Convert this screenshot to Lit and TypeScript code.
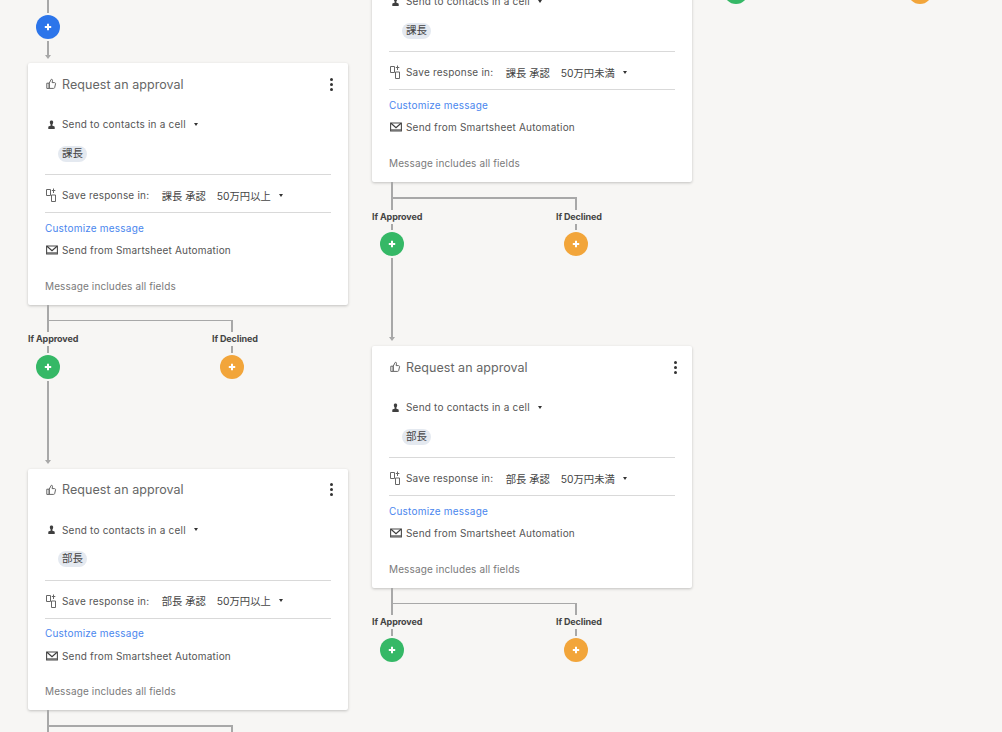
import { LitElement, html, css } from "lit";
import { customElement } from "lit/decorators.js";

const plus = html`<svg class="plus" viewBox="0 0 8 8" width="8" height="8"><path d="M4 .8v6.400M.8 4h6.400" stroke="#fff" stroke-width="2" fill="none"/></svg>`;
const thumb = html`<svg class="ic" width="11" height="12" viewBox="0 0 11 12"><path d="M3.200 5.200 5.200 1.400c.9-.3 1.500.3 1.300 1.300L6.100 4.600h2.400c.8 0 1.200.6 1 1.300l-.8 3.600c-.2.600-.5.900-1.100.9H3.200zM.8 5.200h2.400v5.200H.8z" fill="none" stroke="#666" stroke-width="1"/></svg>`;
const person = html`<svg class="ic" width="11" height="11" viewBox="0 0 11 11"><path d="M5.500 1.500c1 0 1.700.7 1.700 1.700 0 .9-.4 1.700-.8 2.200v1.300c1.200.2 2.300.5 2.300 1.400v2H2.300v-2c0-.9 1.100-1.200 2.300-1.400V5.400c-.4-.5-.8-1.300-.8-2.200 0-1 .7-1.700 1.700-1.700z" fill="#3f3f3f"/></svg>`;
const save = html`<svg class="ic" width="12" height="14" viewBox="0 0 12 14"><path d="M.5 1.500h4v6h-4zM5.500 7h4v6.500h-4z" fill="none" stroke="#666" stroke-width="1"/><path d="M7.500 .5V5M5.800 2.500h3.500" fill="none" stroke="#666" stroke-width="1"/></svg>`;
const mail = html`<svg class="ic" width="12" height="10" viewBox="0 0 12 10"><path d="M.6 1h10.800v8H.6z" fill="#fff" stroke="#4a4a4a" stroke-width="1.100"/><path d="M1 1.300 6 5.600l5-4.300" fill="none" stroke="#3c3c3c" stroke-width="1.200"/><path d="M1 8h10" stroke="#666" stroke-width="1.500"/></svg>`;
const caret = html`<span class="caret"></span>`;

@customElement("app-root")
export class AppRoot extends LitElement {
  static styles = css`
    :host { display: block; height: 732px; overflow: hidden; background: #f7f6f4; font-family: Inter, "Noto Sans CJK JP", sans-serif; }
    .canvas { display: flex; gap: 24px; padding-left: 28px; height: 732px; overflow: hidden; }
    .col { width: 320px; flex: none; display: flex; flex-direction: column; }
    .col2 { margin-top: -59.600px; }
    .col3 { margin-top: -70px; }
    .stem { width: 2px; background: #a8a8a8; margin-left: 19px; flex: none; }
    .arrow { width: 0; height: 0; margin-left: 16.500px; border-left: 3.500px solid transparent; border-right: 3.500px solid transparent; border-top: 4px solid #a8a8a8; flex: none; }
    .node { width: 24px; height: 24px; border-radius: 50%; margin: 2px 0 2px 8px; flex: none; display: flex; align-items: center; justify-content: center; }
    .blue { background: #2c75ea; }
    .green { background: #35b866; }
    .orange { background: #f2a53a; }
    .plus { display: block; }
    .card { background: #fff; border-radius: 2px; box-shadow: 0 1px 3px rgba(0, 0, 0, 0.22); padding: 0 17px 12px; height: 241.600px; box-sizing: border-box; display: flex; flex-direction: column; flex: none; }
    .head { height: 42px; display: flex; align-items: center; flex: none; font-size: 12.500px; color: #666; letter-spacing: 0.05px; }
    .ic { display: block; flex: none; }
    .icbox { width: 17px; flex: none; display: flex; align-items: center; justify-content: flex-start; padding-left: 1px; box-sizing: border-box; }
    .dots { margin-left: auto; width: 3px; display: flex; flex-direction: column; gap: 2px; margin-right: -1.500px; }
    .dots i { display: block; width: 3px; height: 3px; border-radius: 50%; background: #333; }
    .row { display: flex; align-items: center; height: 16px; font-size: 10px; color: #555; letter-spacing: 0.2px; flex: none; white-space: nowrap; }
    .send { margin-top: 11px; }
    .caret { width: 0; height: 0; border-left: 2.500px solid transparent; border-right: 2.500px solid transparent; border-top: 3px solid #333; margin-left: 8px; }
    .chip { margin: 13.500px 0 12.500px 13px; align-self: flex-start; height: 16px; padding: 0 4px; border-radius: 8px; background: #e4e9f0; font-size: 10.500px; line-height: 16px; color: #444; flex: none; }
    .rule { height: 1px; background: #d9d9d9; flex: none; }
    .save { margin: 12px 0 9px; }
    .val { margin-left: 12.500px; color: #444; font-size: 10.300px; letter-spacing: 0; }
    .val2 { margin-left: 11px; color: #444; font-size: 10.300px; letter-spacing: 0; }
    .link { margin-top: 7.500px; height: 14px; line-height: 14px; font-size: 10px; color: #4a86ee; letter-spacing: 0.2px; flex: none; }
    .from { margin-top: 7.500px; }
    .note { margin-top: 20.500px; height: 14px; line-height: 14px; font-size: 10px; color: #7a7a7a; letter-spacing: 0.13px; flex: none; }
    .branch { position: relative; display: flex; flex: none; }
    .bar { position: absolute; left: 21px; top: 15px; width: 183px; height: 1.500px; background: #a8a8a8; }
    .arm { width: 184px; flex: none; display: flex; flex-direction: column; }
    .tall { height: 27.500px; }
    .short { height: 12.500px; margin-top: 15px; }
    .label { height: 14px; line-height: 14px; font-size: 9px; letter-spacing: -0.1px; font-weight: 700; color: #444; white-space: nowrap; flex: none; }
    .tick { height: 6.500px; }
    .s1 { height: 13px; }
    .s2 { height: 14px; }
    .s3 { height: 79px; }
    .gap { height: 5px; flex: none; }
    .gap-first { height: 4px; flex: none; }
  `;

  private card(role: string, cond: string) {
    return html`<section class="card">
      <div class="head"><span class="icbox">${thumb}</span><span>Request an approval</span>
        <span class="dots"><i></i><i></i><i></i></span></div>
      <div class="row send"><span class="icbox">${person}</span><span>Send to contacts in a cell</span>${caret}</div>
      <div class="chip">${role}</div>
      <div class="rule"></div>
      <div class="row save"><span class="icbox">${save}</span><span>Save response in:</span>
        <span class="val">${role} 承認</span><span class="val2">${cond}</span>${caret}</div>
      <div class="rule"></div>
      <div class="link">Customize message</div>
      <div class="row from"><span class="icbox">${mail}</span><span>Send from Smartsheet Automation</span></div>
      <div class="note">Message includes all fields</div>
    </section>`;
  }

  private branch(cont: boolean) {
    return html`<div class="branch">
      <span class="bar"></span>
      <div class="arm">
        <span class="stem tall"></span>
        <span class="label">If Approved</span>
        <span class="stem tick"></span>
        <span class="node green">${plus}</span>
        ${cont ? html`<span class="stem s3"></span><span class="arrow"></span><span class="gap"></span>` : ""}
      </div>
      <div class="arm">
        <span class="stem short"></span>
        <span class="label">If Declined</span>
        <span class="stem tick"></span>
        <span class="node orange">${plus}</span>
      </div>
    </div>`;
  }

  render() {
    return html`<div class="canvas">
      <div class="col">
        <span class="stem s1"></span>
        <span class="node blue">${plus}</span>
        <span class="stem s2"></span>
        <span class="arrow"></span>
        <span class="gap-first"></span>
        ${this.card("課長", "50万円以上")}
        ${this.branch(true)}
        ${this.card("部長", "50万円以上")}
        ${this.branch(false)}
      </div>
      <div class="col col2">
        ${this.card("課長", "50万円未満")}
        ${this.branch(true)}
        ${this.card("部長", "50万円未満")}
        ${this.branch(false)}
      </div>
      <div class="col col3">${this.branch(false)}</div>
    </div>`;
  }
}
